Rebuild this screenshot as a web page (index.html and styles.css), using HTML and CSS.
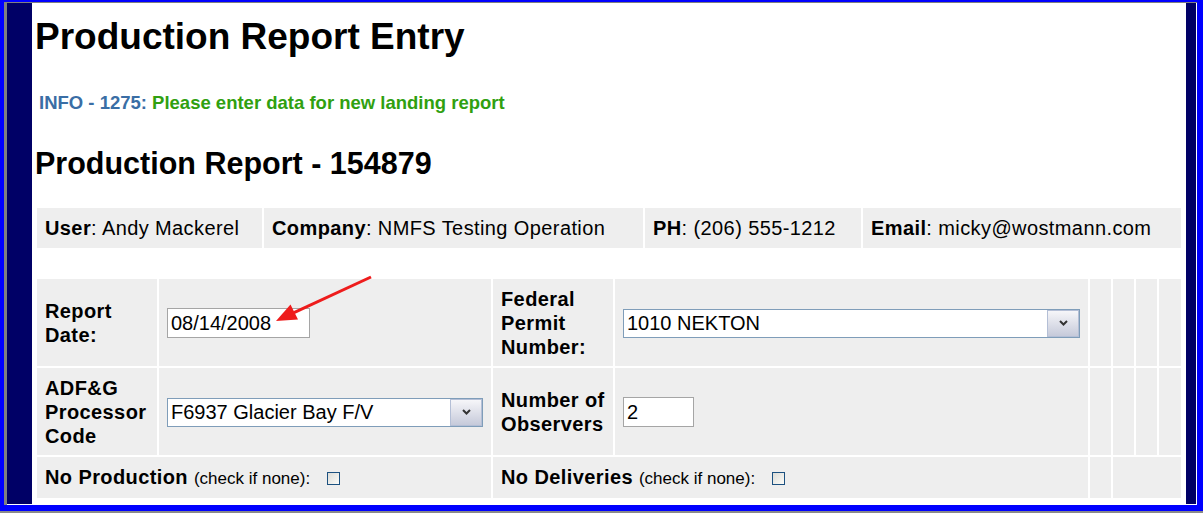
FILE: index.html
```html
<!DOCTYPE html>
<html lang="en">
<head>
    <meta charset="UTF-8">
    <title>Production Report Entry</title>
    <link rel="stylesheet" href="styles.css">
</head>
<body>
    <div class="window">
        <div class="frame">
            <h1>Production Report Entry</h1>

            <p class="info"><span class="info-code">INFO - 1275:</span> <span class="info-text">Please enter data for new landing report</span></p>

            <h2>Production Report - 154879</h2>

            <table class="info-table">
                <colgroup>
                    <col class="c-user">
                    <col class="c-company">
                    <col class="c-phone">
                    <col class="c-email">
                </colgroup>
                <tr>
                    <td><b>User</b>: Andy Mackerel</td>
                    <td><b>Company</b>: NMFS Testing Operation</td>
                    <td><b>PH</b>: (206) 555-1212</td>
                    <td><b>Email</b>: micky@wostmann.com</td>
                </tr>
            </table>

            <table class="form-table">
                <colgroup>
                    <col class="c-label">
                    <col class="c-field">
                    <col class="c-label">
                    <col class="c-field-wide">
                    <col class="c-pad">
                    <col class="c-pad">
                    <col class="c-pad">
                    <col class="c-pad-last">
                </colgroup>
                <tr>
                    <td class="label">Report Date:</td>
                    <td><input class="text-field date-field" type="text" value="08/14/2008"></td>
                    <td class="label">Federal Permit Number:</td>
                    <td>
                        <span class="select select-wide">
                            <select class="select-field">
                                <option>1010 NEKTON</option>
                            </select>
                            <span class="select-btn">
                                <svg width="9" height="6" viewBox="0 0 9 6"><path d="M1 1 L4.5 4.5 L8 1" fill="none" stroke="#333" stroke-width="2"/></svg>
                            </span>
                        </span>
                    </td>
                    <td></td>
                    <td></td>
                    <td></td>
                    <td></td>
                </tr>
                <tr>
                    <td class="label">ADF&amp;G Processor Code</td>
                    <td>
                        <span class="select select-mid">
                            <select class="select-field">
                                <option>F6937 Glacier Bay F/V</option>
                            </select>
                            <span class="select-btn">
                                <svg width="9" height="6" viewBox="0 0 9 6"><path d="M1 1 L4.5 4.5 L8 1" fill="none" stroke="#333" stroke-width="2"/></svg>
                            </span>
                        </span>
                    </td>
                    <td class="label">Number of Observers</td>
                    <td><input class="text-field count-field" type="text" value="2"></td>
                    <td></td>
                    <td></td>
                    <td></td>
                    <td></td>
                </tr>
                <tr>
                    <td colspan="2"><b>No Production</b> <span class="hint">(check if none):</span><input class="check" type="checkbox"></td>
                    <td colspan="2"><b>No Deliveries</b> <span class="hint">(check if none):</span><input class="check" type="checkbox"></td>
                    <td></td>
                    <td colspan="3"></td>
                </tr>
            </table>

            <!-- annotation arrow pointing at the date -->
            <svg class="arrow" width="106" height="56" viewBox="0 0 106 56">
                <line x1="101" y1="5" x2="24" y2="40.6" stroke="#ee1c1c" stroke-width="3"/>
                <polygon points="6,49 28,47.5 20.5,32.5" fill="#ee1c1c"/>
            </svg>
        </div>
    </div>
</body>
</html>
```

FILE: styles.css
```css
body {
    margin: 0;
    height: 513px;
    box-sizing: border-box;
    background-color: #0000ff;
    padding: 2px 6px 6px 4px;
    border-bottom: 2px solid #8a8a8a;
    font-family: "Liberation Sans", Arial, sans-serif;
    color: #000;
    overflow: hidden;
}
.window {
    height: 100%;
    box-sizing: border-box;
    border-top: 1px solid #808080;
    border-left: 3px solid #808080;
    background-color: #fff;
    padding: 0 1px 1px 0;
}
.frame {
    position: relative;
    height: 100%;
    box-sizing: border-box;
    border-left: 25px solid #000066;
    border-right: 10px solid #000066;
    padding: 14px 3px 0;
}
h1 {
    margin: 0;
    font-size: 37px;
    line-height: 40px;
}
.info {
    margin: 35px 0 0;
    padding-left: 4px;
    font-size: 18.5px;
    line-height: 22px;
    font-weight: bold;
}
.info-code {
    color: #3a6ea5;
}
.info-text {
    color: #30a010;
}
h2 {
    margin: 32px 0 0;
    font-size: 30.5px;
    line-height: 34px;
}
table {
    width: 100%;
    table-layout: fixed;
    border-spacing: 2px;
}
td {
    background-color: #eeeeee;
    font-size: 20px;
    line-height: 24px;
    letter-spacing: 0.4px;
    padding: 8px;
}
.info-table {
    margin-top: 26px;
}
.c-user { width: 225px; }
.c-company { width: 379px; }
.c-phone { width: 216px; }
.c-email { width: 318px; }
.form-table {
    margin-top: 27px;
}
.form-table td {
    padding: 8px 8px 7px;
}
.form-table .label {
    padding-right: 3px;
}
.c-label { width: 120px; }
.c-field { width: 332px; }
.c-field-wide { width: 473px; }
.c-pad { width: 21px; }
.c-pad-last { width: 22px; }
.label {
    font-weight: bold;
}
.text-field {
    font-family: "Liberation Sans", Arial, sans-serif;
    font-size: 20px;
    height: 30px;
    box-sizing: border-box;
    border: 1px solid #a5a5a5;
    padding: 0 3px;
    margin: 0;
    vertical-align: middle;
    background-color: #fff;
}
.date-field {
    width: 143px;
}
.count-field {
    width: 71px;
}
.select {
    display: inline-flex;
    vertical-align: middle;
    height: 29px;
    box-sizing: border-box;
    border: 1px solid #7f9db9;
    background-color: #fff;
}
.select-wide {
    width: 457px;
}
.select-mid {
    width: 316px;
}
.select-field {
    flex: 1;
    min-width: 0;
    appearance: none;
    border: none;
    background: transparent;
    font-family: "Liberation Sans", Arial, sans-serif;
    font-size: 20px;
    padding: 0 3px;
    margin: 0;
    color: #000;
}
.select-btn {
    width: 30px;
    display: flex;
    align-items: center;
    justify-content: center;
    border: 1px solid #b4bfd6;
    background: linear-gradient(#f6f6f9, #c6cada);
}
.hint {
    font-weight: normal;
    font-size: 17px;
    letter-spacing: 0;
}
.check {
    appearance: none;
    width: 13px;
    height: 13px;
    margin: 0 0 0 17px;
    box-sizing: border-box;
    border: 1px solid #1c5180;
    background: linear-gradient(135deg, #dcdcd7, #fbfbf8);
    vertical-align: -1px;
}
.arrow {
    position: absolute;
    left: 238px;
    top: 269px;
}
```
